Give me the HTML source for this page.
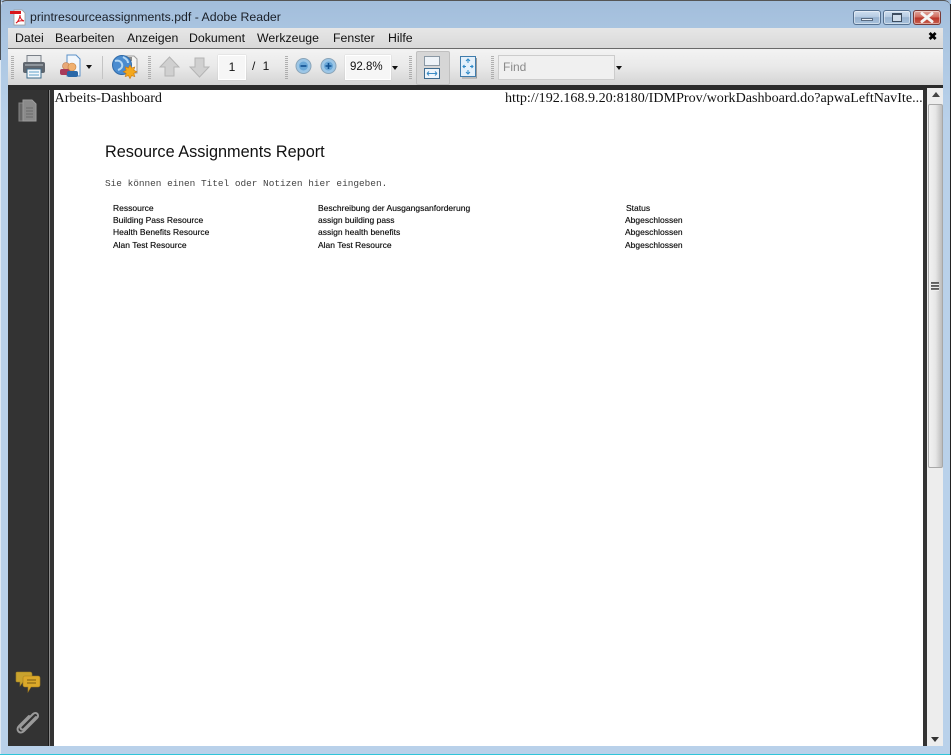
<!DOCTYPE html>
<html><head><meta charset="utf-8"><style>
html,body{margin:0;padding:0;background:#fff}
#w{position:relative;width:951px;height:755px;overflow:hidden;font-family:"Liberation Sans",sans-serif;background:linear-gradient(#a2bddb 0,#a9c4e0 28px,#b9d1ea 120px,#b9d1ea 100%);}
.a{position:absolute;white-space:nowrap}
.m{top:31px;font-size:12.3px;color:#111;line-height:14px}
.t{font-size:8.5px;line-height:10px;color:#111;text-shadow:0 0 .4px #333}
.sep{position:absolute;top:56px;width:3px;height:23px;background:repeating-linear-gradient(#a0a0a0 0,#a0a0a0 1px,transparent 1px,transparent 2px);opacity:.8}
.wb{position:absolute;top:10px;height:13px;border:1px solid #55708f;border-radius:3px;box-shadow:inset 0 0 0 1px rgba(255,255,255,.45);background:linear-gradient(#cfdff0 0,#b6cbe2 45%,#98b3d0 50%,#a8c2dc 100%)}
</style></head><body><div id="w">
<div class="a" style="left:0;top:0;width:950px;height:754px;border-left:1px solid #dfe9f4;border-top:1px solid #555;border-right:0;border-bottom:0;border-radius:6px 6px 0 0;box-sizing:border-box"></div>
<div class="a" style="left:0;top:0;width:1px;height:60px;background:#4a4f55"></div>
<div class="a" style="left:0;top:754px;width:951px;height:1px;background:#2fc4d8"></div>
<div class="a" style="left:950px;top:4px;width:1px;height:751px;background:#222"></div>

<svg class="a" style="left:10px;top:9px" width="17" height="17" viewBox="0 0 17 17"><path d="M4 1h8l3 3v12H4z" fill="#fff" stroke="#999" stroke-width=".8"/><rect x="0" y="2" width="11" height="3" fill="#d8141c"/><path d="M6 14c2-1 4-5 4-8 0 3 1 5 4 6-3-.5-6 0-8 2z" fill="none" stroke="#d8141c" stroke-width="1"/></svg>
<div class="a" style="left:30px;top:9px;font-size:12.3px;line-height:16px;color:#1a1f28">printresourceassignments.pdf - Adobe Reader</div>

<div class="wb" style="left:853px;width:26px"><div class="a" style="left:7px;top:7px;width:12px;height:3px;background:#e8eef5;border:1px solid #5a6c82;box-sizing:border-box"></div></div>
<div class="wb" style="left:883px;width:26px"><div class="a" style="left:8px;top:2px;width:10px;height:9px;border:1px solid #3d4d60;border-top-width:2px;box-sizing:border-box;background:#cfdcea"></div></div>
<div class="wb" style="left:913px;width:26px;border-color:#7a3a36;background:linear-gradient(#e0a79e 0,#d06a5c 48%,#b8352a 52%,#c8604e 100%)"><svg class="a" style="left:6px;top:1px" width="14" height="11" viewBox="0 0 14 11"><path d="M2 1.500L12 9.500M12 1.500L2 9.500" stroke="#f4f4f4" stroke-width="3" stroke-linecap="round"/></svg></div>

<!-- menu -->
<div class="a" style="left:8px;top:28px;width:935px;height:20px;background:linear-gradient(#e6e6e6,#d9d9d9)"></div>
<div class="a" style="left:8px;top:48px;width:935px;height:1px;background:#6a6a6a"></div>
<div class="a m" style="left:15px">Datei</div>
<div class="a m" style="left:55px">Bearbeiten</div>
<div class="a m" style="left:127px">Anzeigen</div>
<div class="a m" style="left:189px">Dokument</div>
<div class="a m" style="left:257px">Werkzeuge</div>
<div class="a m" style="left:333px">Fenster</div>
<div class="a m" style="left:388px">Hilfe</div>
<div class="a" style="left:928px;top:30px;font-size:11px;line-height:14px;font-weight:bold;color:#000">✖</div>

<!-- toolbar -->
<div class="a" style="left:8px;top:49px;width:935px;height:36px;background:linear-gradient(#f3f3f3 0,#e9e9e9 50%,#d4d4d4 100%)"></div>
<div class="sep" style="left:11px"></div>
<div class="sep" style="left:148px"></div>
<div class="sep" style="left:285px"></div>
<div class="sep" style="left:409px"></div>
<div class="sep" style="left:491px"></div>
<div class="a" style="left:102px;top:56px;width:1px;height:23px;background:#c4c4c4"></div>

<svg class="a" style="left:22px;top:54px" width="25" height="26" viewBox="0 0 25 26"><rect x="5" y="1.500" width="14" height="8" fill="#e4e6e8" stroke="#7a8088"/><rect x="1" y="8" width="22" height="11" rx="2" fill="#5f666e"/><rect x="3" y="10" width="18" height="2" fill="#8e959c"/><rect x="5" y="15" width="14" height="9" fill="#f4f8fb" stroke="#3c6a8a"/><path d="M7 18h10M7 21h10" stroke="#5ea0c8"/></svg>

<svg class="a" style="left:59px;top:54px" width="24" height="25" viewBox="0 0 24 25"><path d="M8 1h9l4 4v17H8z" fill="#f2f7fc" stroke="#5a90c8"/><circle cx="7" cy="12" r="3.500" fill="#e8a878" stroke="#b87848" stroke-width=".6"/><rect x="1" y="15" width="10" height="6" rx="2" fill="#a83a5a"/><circle cx="13" cy="13" r="4" fill="#f0b070" stroke="#c08040" stroke-width=".6"/><rect x="8" y="17" width="11" height="6" rx="2" fill="#2a68a8"/></svg>
<div class="a" style="left:86px;top:65px;border:3.500px solid transparent;border-top:4px solid #111;border-bottom:0"></div>

<svg class="a" style="left:111px;top:54px" width="28" height="27" viewBox="0 0 28 27"><path d="M12 2h11l3 3v14H12z" fill="#f4f4f2" stroke="#9a9a9a"/><rect x="12" y="3" width="9" height="4" fill="#8a8a8a"/><circle cx="11" cy="11" r="9.500" fill="#4a8cd0" stroke="#2f6aa8"/><path d="M4 7c3-1 6 0 7 3s-1 5-4 6M12 3c2 1 5 3 5 6" stroke="#b4d8f4" stroke-width="2" fill="none"/><path d="M19 11l1.600 3 3.200-1-1 3.200 3 1.600-3 1.600 1 3.200-3.200-1-1.600 3-1.600-3-3.200 1 1-3.200-3-1.600 3-1.600-1-3.200 3.200 1z" fill="#f4a81c" stroke="#c87810" stroke-width=".6"/></svg>

<svg class="a" style="left:159px;top:56px" width="21" height="22" viewBox="0 0 21 22"><path d="M10.500 1L20 11h-5v9H6v-9H1z" fill="#d0d0d0" stroke="#b4b4b4"/></svg>
<svg class="a" style="left:189px;top:56px" width="21" height="22" viewBox="0 0 21 22"><path d="M10.500 21L20 11h-5V2H6v9H1z" fill="#d0d0d0" stroke="#b4b4b4"/></svg>

<div class="a" style="left:218px;top:55px;width:26px;height:23px;background:#f6f6f6;border:1px solid #fff;box-shadow:0 0 1px #bbb;text-align:center;font-size:12px;line-height:23px;color:#111">1</div>
<div class="a" style="left:252px;top:59px;font-size:12px;line-height:14px;color:#111;word-spacing:4px">/ 1</div>

<svg class="a" style="left:295px;top:57px" width="17" height="18" viewBox="0 0 17 18"><circle cx="8.500" cy="9" r="7.500" fill="#9cc6e6" stroke="#8aa4b8"/><circle cx="8.500" cy="9" r="4.500" fill="#6aa8d8"/><path d="M5.500 9h6" stroke="#0f4f8f" stroke-width="1.600"/></svg>
<svg class="a" style="left:320px;top:57px" width="17" height="18" viewBox="0 0 17 18"><circle cx="8.500" cy="9" r="7.500" fill="#9cc6e6" stroke="#8aa4b8"/><circle cx="8.500" cy="9" r="4.500" fill="#6aa8d8"/><path d="M5.500 9h6M8.500 6v6" stroke="#0f4f8f" stroke-width="1.600"/></svg>

<div class="a" style="left:345px;top:55px;width:44px;height:23px;background:#f6f6f6;border:1px solid #fff;box-shadow:0 0 1px #bbb;font-size:11.500px;line-height:23px;color:#111;text-indent:4px">92.8%</div>
<div class="a" style="left:392px;top:66px;border:3.500px solid transparent;border-top:4px solid #111;border-bottom:0"></div>

<div class="a" style="left:416px;top:51px;width:32px;height:32px;background:#d6d6d6;border:1px solid #c0c0c0;border-radius:2px;box-sizing:content-box"></div>
<svg class="a" style="left:424px;top:56px" width="17" height="24" viewBox="0 0 17 24"><rect x=".5" y=".5" width="15" height="9" fill="#eef3f8" stroke="#8a98a4"/><rect x=".5" y="12.500" width="15" height="10" fill="#eef5fb" stroke="#3f6c90"/><path d="M3 17.500h10M3 17.500l2-2M3 17.500l2 2M13 17.500l-2-2M13 17.500l-2 2" stroke="#3a8ac4" fill="none"/></svg>
<svg class="a" style="left:460px;top:56px" width="18" height="23" viewBox="0 0 18 23"><rect x=".5" y=".5" width="15" height="20" fill="#e4f0fa" stroke="#3f7cac"/><path d="M8 3v4M6 5l2-2 2 2M8 18v-4M6 16l2 2 2-2M3 10.500h3M4.500 9l-1.500 1.500 1.500 1.500M13 10.500h-3M11.500 9l1.500 1.500-1.500 1.500" stroke="#2f8ac8" fill="none"/><path d="M16.500 2v20H2" stroke="#999" fill="none"/></svg>

<div class="a" style="left:498px;top:55px;width:115px;height:23px;background:#f0f0f0;border:1px solid #ccc;font-size:12px;line-height:23px;color:#8a8a8a;text-indent:4px">Find</div>
<div class="a" style="left:616px;top:66px;border:3.500px solid transparent;border-top:4px solid #111;border-bottom:0"></div>

<!-- dark content -->
<div class="a" style="left:8px;top:85px;width:935px;height:661px;background:#333"></div>
<div class="a" style="left:8px;top:85px;width:935px;height:5px;background:#2b2b2b"></div>
<div class="a" style="left:49px;top:90px;width:1px;height:656px;background:#8a8a8a"></div>
<div class="a" style="left:48px;top:90px;width:1px;height:656px;background:#1a1a1a"></div>

<svg class="a" style="left:17px;top:99px" width="21" height="25" viewBox="0 0 21 25"><path d="M2 4h10v18H2z" fill="#666" stroke="#858585"/><path d="M6 1h9l4 4v17H6z" fill="#8a8a8a" stroke="#9c9c9c"/><path d="M9 9h7M9 12h7M9 15h7M9 18h7" stroke="#6a6a6a"/></svg>

<svg class="a" style="left:15px;top:671px" width="26" height="22" viewBox="0 0 26 22"><path d="M2 1h13a2 2 0 0 1 2 2v6a2 2 0 0 1-2 2H8l-3 4v-4H2a1 1 0 0 1-1-1V2a1 1 0 0 1 1-1z" fill="#c9a32e" stroke="#a07f20" stroke-width=".6"/><path d="M10 5h13a2 2 0 0 1 2 2v7a2 2 0 0 1-2 2H16l-3 5v-5h-3a2 2 0 0 1-2-2V7a2 2 0 0 1 2-2z" fill="#dca92a" stroke="#a87f1c" stroke-width=".6"/><path d="M12 9h9M12 12h9" stroke="#7a5a10"/></svg>
<svg class="a" style="left:15px;top:710px" width="26" height="26" viewBox="0 0 26 26"><path d="M21 7L9 19c-2 2-5-1-3-3L18 4c3-3 7 1 4 4L9 21c-4 4-9-1-5-5L14 6" fill="none" stroke="#9a9a9a" stroke-width="2" stroke-linecap="round"/></svg>

<!-- page -->
<div class="a" style="left:54px;top:90px;width:869px;height:656px;background:#fff"></div>
<div class="a" style="left:54.500px;top:90px;font-family:'Liberation Serif',serif;font-size:14.130px;line-height:16px;color:#111">Arbeits-Dashboard</div>
<div class="a" style="left:505px;top:90px;font-family:'Liberation Serif',serif;font-size:14.100px;line-height:16px;color:#111">http://192.168.9.20:8180/IDMProv/workDashboard.do?apwaLeftNavIte...</div>
<div class="a" style="left:105px;top:143px;font-size:16.280px;line-height:19px;color:#111">Resource Assignments Report</div>
<div class="a" style="left:105px;top:178px;font-family:'Liberation Mono',monospace;font-size:9.420px;line-height:11px;color:#444">Sie können einen Titel oder Notizen hier eingeben.</div>

<div class="a t" style="left:113px;top:203px">Ressource</div>
<div class="a t" style="left:113px;top:215px">Building Pass Resource</div>
<div class="a t" style="left:113px;top:227px">Health Benefits Resource</div>
<div class="a t" style="left:113px;top:240px">Alan Test Resource</div>
<div class="a t" style="left:318px;top:203px">Beschreibung der Ausgangsanforderung</div>
<div class="a t" style="left:318px;top:215px">assign building pass</div>
<div class="a t" style="left:318px;top:227px">assign health benefits</div>
<div class="a t" style="left:318px;top:240px">Alan Test Resource</div>
<div class="a t" style="left:626px;top:203px">Status</div>
<div class="a t" style="left:625px;top:215px">Abgeschlossen</div>
<div class="a t" style="left:625px;top:227px">Abgeschlossen</div>
<div class="a t" style="left:625px;top:240px">Abgeschlossen</div>

<!-- scrollbar -->
<div class="a" style="left:927px;top:88px;width:16px;height:658px;background:#ededed"></div>
<div class="a" style="left:932px;top:92px;border:4px solid transparent;border-bottom:5px solid #444;border-top:0"></div>
<div class="a" style="left:928px;top:104px;width:13px;height:362px;border:1px solid #a8a8a8;border-radius:2px;background:linear-gradient(90deg,#f2f2f2,#e6e6e6 50%,#bdbdbd)"></div>
<div class="a" style="left:931px;top:282px;width:8px;height:9px;background:repeating-linear-gradient(#555 0,#777 2px,#eee 2px,#eee 3px)"></div>
<div class="a" style="left:931px;top:737px;border:4px solid transparent;border-top:5px solid #333;border-bottom:0"></div>
</div></body></html>
